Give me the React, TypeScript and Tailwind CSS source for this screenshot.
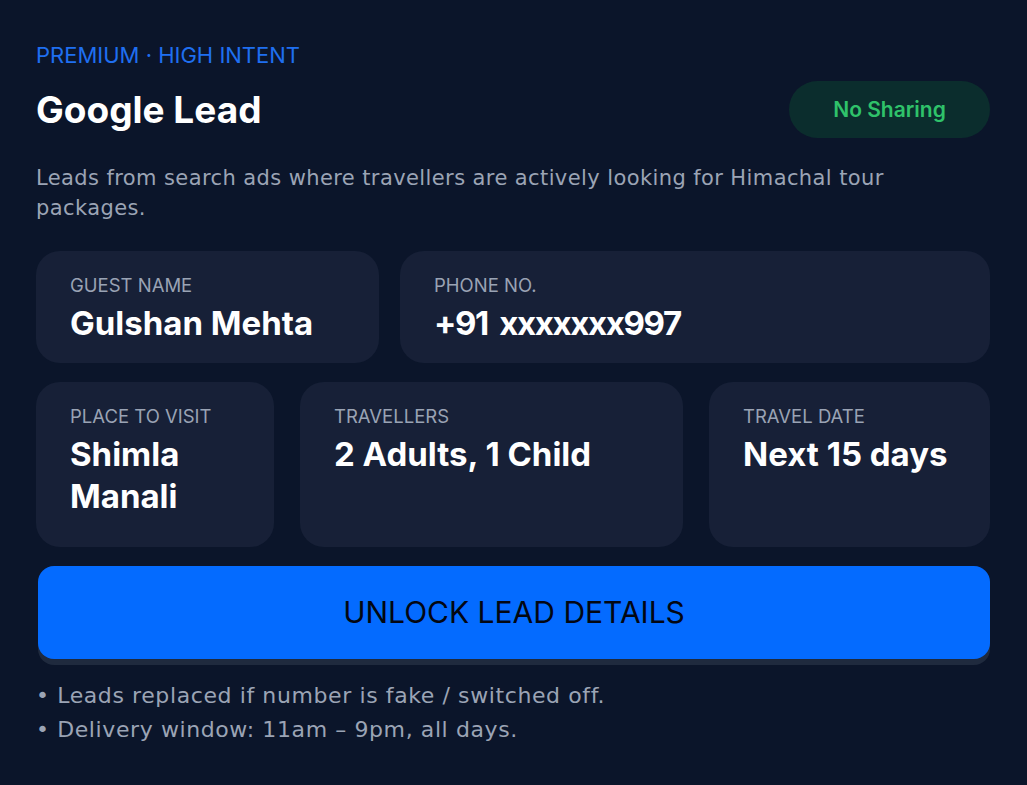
import React from "react";

const inter = { fontFamily: "Inter, 'Noto Sans', sans-serif" };
const dejavu = { fontFamily: "'DejaVu Sans', 'Noto Sans', sans-serif" };

function Box({
  label,
  value,
  className,
  valueClass,
}: {
  label: string;
  value: React.ReactNode;
  className?: string;
  valueClass?: string;
}) {
  return (
    <div className={`rounded-[24px] bg-[#172037] pl-[34px] pr-[20px] pt-[23px] ${className ?? ""}`}>
      <div className="text-[18.5px] leading-[22px] text-[#9aa3b4] uppercase">{label}</div>
      <div className={`mt-[6px] text-[33px] leading-[42px] font-bold text-white ${valueClass ?? ""}`}>{value}</div>
    </div>
  );
}

export default function App() {
  return (
    <div className="min-h-screen w-full bg-[#0b152a] pt-[40px] pl-[36px] pr-[37px]" style={inter}>
      <div className="w-[954px]">
        <div className="text-[22px] leading-[30px] text-[#1f6ff0]">PREMIUM · HIGH INTENT</div>
        <div className="mt-[11px] flex h-[57px] items-center justify-between">
          <div className="text-[37px] font-bold leading-[44px] text-white">Google Lead</div>
          <div className="flex h-[57px] w-[201px] items-center justify-center rounded-full bg-[#0b2d2d] text-[21px] font-semibold text-[#2fc26a]">
            No Sharing
          </div>
        </div>
        <p className="mt-[25px] max-w-[900px] text-[21px] leading-[30px] tracking-[0.4px] text-[#9ba4b5]" style={dejavu}>
          Leads from search ads where travellers are actively looking for Himachal tour packages.
        </p>
        <div className="mt-[28px] grid grid-cols-[343px_1fr] gap-[21px]">
          <Box label="Guest Name" value="Gulshan Mehta" className="h-[112px]" />
          <Box
            label="Phone No."
            value="+91 xxxxxxx997"
            className="h-[112px]"
            valueClass="tracking-[-1.4px] [word-spacing:5px]"
          />
        </div>
        <div className="mt-[19px] grid grid-cols-[238px_383px_1fr] gap-[26px]">
          <Box
            label="Place to Visit"
            value={
              <>
                Shimla
                <br />
                Manali
              </>
            }
            className="h-[165px]"
          />
          <Box label="Travellers" value="2 Adults, 1 Child" className="h-[165px]" />
          <Box label="Travel Date" value="Next 15 days" className="h-[165px]" />
        </div>
        <button className="mt-[19px] ml-[2px] flex h-[93px] w-[952px] items-center justify-center rounded-[16px] bg-[#046bff] text-[30px] text-[#030712] shadow-[0_6px_0_#1f2a3e]">
          UNLOCK LEAD DETAILS
        </button>
        <div className="mt-[20px] text-[22px] leading-[34px] tracking-[0.6px] text-[#9ba4b5]" style={dejavu}>
          <div>• Leads replaced if number is fake / switched off.</div>
          <div>• Delivery window: 11am – 9pm, all days.</div>
        </div>
      </div>
    </div>
  );
}
